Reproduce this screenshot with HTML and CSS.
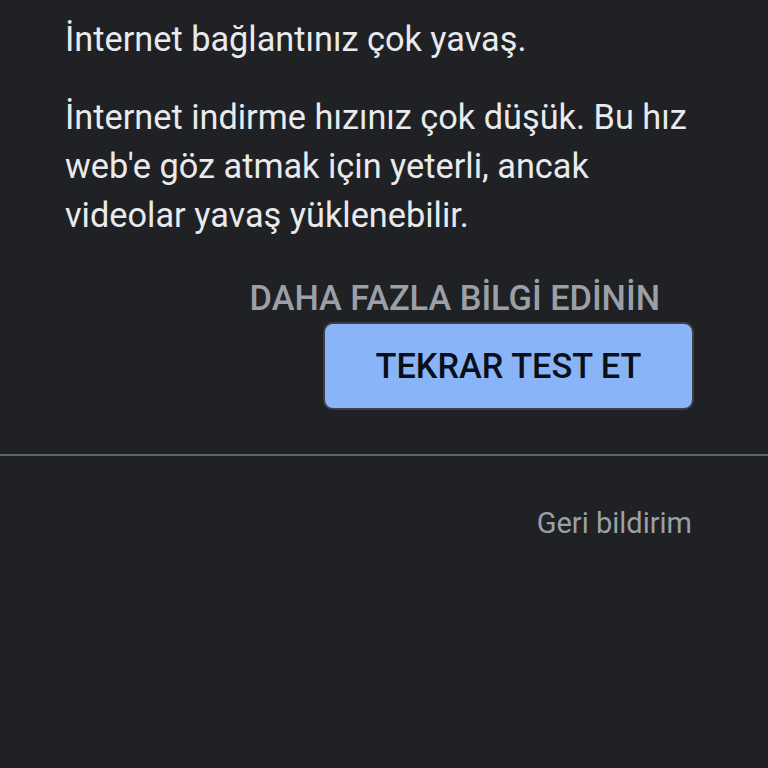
FILE: index.html
```html
<!DOCTYPE html>
<html lang="tr">
<head>
<meta charset="utf-8">
<link rel="stylesheet" href="styles.css">
</head>
<body>
<main class="content">
  <p class="title">İnternet bağlantınız çok yavaş.</p>
  <p class="desc">İnternet indirme hızınız çok düşük. Bu hız web'e göz atmak için yeterli, ancak videolar yavaş yüklenebilir.</p>
  <div class="actions">
    <a class="learn">DAHA FAZLA BİLGİ EDİNİN</a>
    <button class="retest">TEKRAR TEST ET</button>
  </div>
</main>
<hr class="divider">
<footer class="footer">
  <a class="feedback">Geri bildirim</a>
</footer>
</body>
</html>
```
FILE: styles.css
```css
html, body {
  margin: 0;
  padding: 0;
  background: #202124;
  height: 100%;
}
body {
  font-family: Roboto, "Noto Sans", sans-serif;
  color: #e8eaed;
}
.content {
  padding: 15px 74px 0 65px;
}
.title {
  margin: 0;
  font-size: 34.3px;
  line-height: 49px;
}
.desc {
  margin: 29px 0 0;
  font-size: 34.3px;
  line-height: 49px;
}
.actions {
  display: flex;
  flex-direction: column;
  align-items: flex-end;
  margin-top: 38px;
}
.learn {
  color: #9aa0a6;
  font-size: 34.3px;
  font-weight: 500;
  line-height: 40px;
  margin-right: 34px;
}
.retest {
  margin-top: 4px;
  width: 371px;
  height: 88px;
  background: #8ab4f8;
  border: 2px solid #3c4043;
  border-radius: 10px;
  color: #0b0f19;
  font-family: Roboto, sans-serif;
  font-size: 34.3px;
  font-weight: 500;
  padding: 0;
}
.divider {
  margin: 44px 0 0;
  border: 0;
  height: 2px;
  background: #5f6368;
}
.footer {
  display: flex;
  justify-content: flex-end;
  padding: 50px 76px 0 0;
}
.feedback {
  color: #9aa0a6;
  font-size: 29px;
  line-height: 34px;
}
```
